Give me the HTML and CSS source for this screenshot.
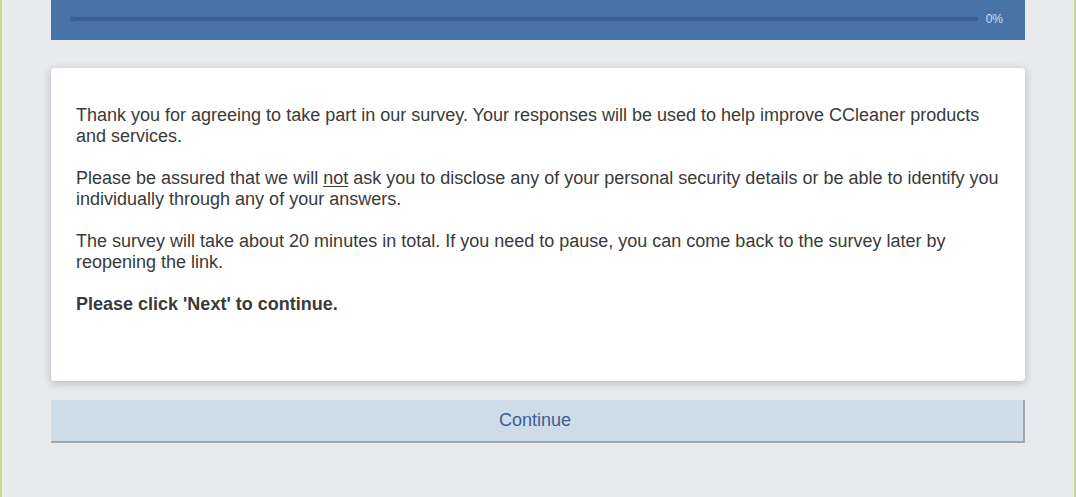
FILE: index.html
```html
<!DOCTYPE html>
<html lang="en">
<head>
<meta charset="utf-8">
<title>Survey</title>
<link rel="stylesheet" href="styles.css">
</head>
<body>
<div class="page">
  <div class="wrap">
    <header class="progress-bar">
      <div class="track"><span class="knob"></span></div>
      <span class="pct">0%</span>
    </header>
    <main class="card">
      <p>Thank you for agreeing to take part in our survey. Your responses will be used to help improve CCleaner products and services.</p>
      <p>Please be assured that we will <u>not</u> ask you to disclose any of your personal security details or be able to identify you individually through any of your answers.</p>
      <p>The survey will take about 20 minutes in total. If you need to pause, you can come back to the survey later by reopening the link.</p>
      <p><strong>Please click 'Next' to continue.</strong></p>
    </main>
    <button class="continue" type="button">Continue</button>
  </div>
</div>
</body>
</html>
```
FILE: styles.css
```css
html, body {
  margin: 0;
  padding: 0;
  height: 100%;
}
body {
  background: #e9eaee;
  font-family: "Liberation Sans", Arial, sans-serif;
}
.page {
  min-height: 100%;
  box-sizing: border-box;
  border-left: 2px solid #c9dc8e;
  border-right: 2px solid #c9dc8e;
}
.wrap {
  width: 974px;
  margin: 0 auto;
}
.progress-bar {
  height: 40px;
  background: #4873a9;
  display: flex;
  align-items: center;
  padding: 0 22px 0 19px;
  box-sizing: border-box;
}
.track {
  flex: 1;
  height: 4px;
  background: #3a5f92;
  margin-top: -2px;
  position: relative;
}
.knob {
  position: absolute;
  left: 0;
  top: -1px;
  width: 3px;
  height: 6px;
  background: #3d6396;
}
.pct {
  margin-left: 8px;
  font-size: 12px;
  color: #d3def0;
  margin-top: -2px;
}
.card {
  margin-top: 28px;
  height: 313px;
  box-sizing: border-box;
  background: #fff;
  border-radius: 4px;
  box-shadow: 0 2px 9px rgba(40, 50, 70, 0.28);
  padding: 37px 25px;
  color: #3a3a3a;
  font-size: 18px;
  line-height: 21px;
}
.card p {
  margin: 0 0 21px;
}
.card u {
  text-underline-offset: 2px;
}
.card strong {
  font-weight: bold;
}
.continue {
  display: block;
  width: 100%;
  margin-top: 19px;
  height: 43px;
  background: #cedcea;
  border: 0;
  border-right: 2px solid #9fa7b2;
  border-bottom: 2px solid #9fa7b2;
  color: #3f5f8c;
  font-family: "Liberation Sans", Arial, sans-serif;
  font-size: 18px;
  padding: 0 4px 0 0;
  cursor: pointer;
}
```
